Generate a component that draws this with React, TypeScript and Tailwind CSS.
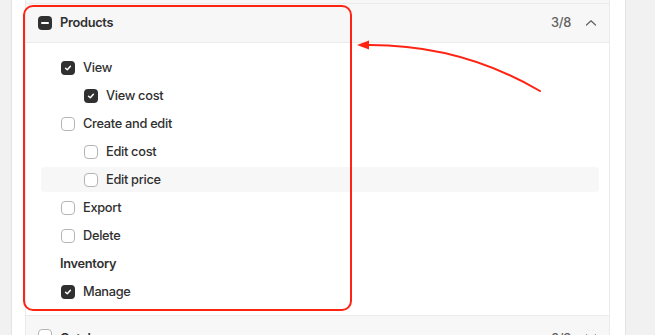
import React from "react";

function Box({ state }: { state: "checked" | "empty" | "minus" }) {
  if (state === "empty") {
    return <span className="block w-[14px] h-[14px] rounded-[4px] border border-[#b5b5b5] bg-white shrink-0" />;
  }
  return (
    <span className="flex items-center justify-center w-[14px] h-[14px] rounded-[4px] bg-[#303030] shrink-0">
      {state === "checked" ? (
        <svg width="10" height="10" viewBox="0 0 10 10" fill="none">
          <path d="M2.6 5.2 L4.3 6.8 L7.4 3.3" stroke="white" strokeWidth="1.5" strokeLinecap="round" strokeLinejoin="round" />
        </svg>
      ) : (
        <span className="block w-[8px] h-[2px] rounded bg-white" />
      )}
    </span>
  );
}

type Row = { label: string; level: 1 | 2 | 0; state?: "checked" | "empty"; hl?: boolean };

const rows: Row[] = [
  { label: "View", level: 1, state: "checked" },
  { label: "View cost", level: 2, state: "checked" },
  { label: "Create and edit", level: 1, state: "empty" },
  { label: "Edit cost", level: 2, state: "empty" },
  { label: "Edit price", level: 2, state: "empty", hl: true },
  { label: "Export", level: 1, state: "empty" },
  { label: "Delete", level: 1, state: "empty" },
  { label: "Inventory", level: 0 },
  { label: "Manage", level: 1, state: "checked" },
];

function Chevron({ up }: { up: boolean }) {
  return (
    <svg width="12" height="12" viewBox="0 0 12 12" fill="none">
      <path d={up ? "M1.5 8 L6 3.8 L10.5 8" : "M1.5 4 L6 8.2 L10.5 4"} stroke="#616161" strokeWidth="1.2" strokeLinecap="round" strokeLinejoin="round" />
    </svg>
  );
}

export default function App() {
  return (
    <div className="relative w-[655px] h-[335px] overflow-hidden bg-[#f1f1f1] flex text-[12.8px] tracking-[-0.3px] text-[#303030]" style={{ fontFamily: "Inter, 'Noto Sans', sans-serif" }}>
      <div className="w-[11px] shrink-0" />
      <div className="w-[615px] shrink-0 bg-white border-x border-[#e3e3e3] pl-[13px] pr-[15px]">
        <div className="w-[585px] border-x border-[#ebebeb]">
          <div className="h-[4px] bg-[#f7f7f7] border-b border-[#ebebeb]" />
          <div className="h-[39px] bg-[#f7f7f7] border-b border-[#ebebeb] flex items-center pl-[12px] pr-[12px]">
            <Box state="minus" />
            <span className="ml-[8px] font-[600]">Products</span>
            <span className="ml-auto text-[#616161] font-[450]">3/8</span>
            <span className="ml-[14px] flex"><Chevron up /></span>
          </div>
          <div className="h-[273px] border-b border-[#ebebeb] pt-[12px] pl-[15px] pr-[10px] flex flex-col gap-[3px]">
            {rows.map((r) => (
              <div
                key={r.label}
                className={
                  "h-[25px] flex items-center rounded-[4px] " +
                  (r.hl ? "bg-[#f7f7f7] " : "") +
                  (r.level === 2 ? "pl-[43px]" : r.level === 1 ? "pl-[20px]" : "pl-[19px]")
                }
              >
                {r.state ? (
                  <>
                    <Box state={r.state} />
                    <span className="ml-[8px] font-[450]">{r.label}</span>
                  </>
                ) : (
                  <span className="font-[600]">{r.label}</span>
                )}
              </div>
            ))}
          </div>
          <div className="h-[39px] bg-[#f7f7f7] flex items-start pt-[13px] pl-[12px] pr-[12px]">
            <Box state="empty" />
            <span className="ml-[8px] font-[600]">Catalogs</span>
            <span className="ml-auto text-[#616161] font-[450]">0/3</span>
            <span className="ml-[14px] flex mt-[2px]"><Chevron up={false} /></span>
          </div>
        </div>
      </div>
      <div className="absolute left-[23px] top-[5px] w-[329px] h-[306px] border-2 border-[#ff2314] rounded-[10px]" />
      <svg className="absolute left-0 top-0" width="655" height="335" viewBox="0 0 655 335" fill="none">
        <path d="M366 45 Q 460 44 540 91" stroke="#ff2314" strokeWidth="2" strokeLinecap="round" />
        <path d="M357 45 L369 40.5 L369 49.5 Z" fill="#ff2314" />
      </svg>
    </div>
  );
}
